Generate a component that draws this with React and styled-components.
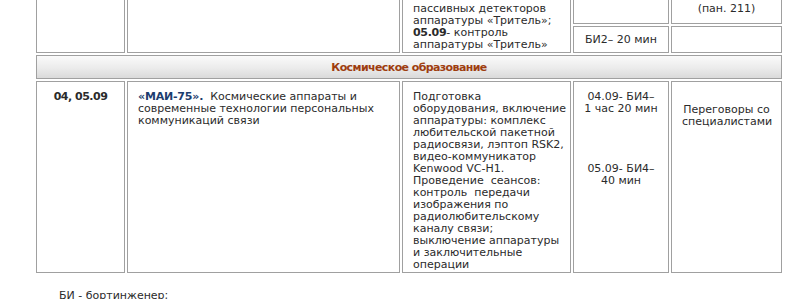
import React from "react";
import styled, { createGlobalStyle } from "styled-components";

const GlobalStyle = createGlobalStyle`
  html, body {
    margin: 0;
    padding: 0;
    background: #ffffff;
  }
  body {
    font-family: "DejaVu Sans", Verdana, sans-serif;
    font-size: 11px;
    line-height: 12px;
    color: #2b2b2b;
  }
`;

const Page = styled.div`
  height: 299px;
  overflow: hidden;
  padding-left: 34px;
`;

const Schedule = styled.table`
  border-collapse: separate;
  border-spacing: 2px;
  table-layout: fixed;
  width: 750px;
  margin-top: -21px;
  font: 11px/12px "DejaVu Sans", Verdana, sans-serif;
  color: #2b2b2b;
`;

const Col = styled.col`
  width: ${(p) => p.$w}px;
`;

const Row = styled.tr`
  height: ${(p) => (p.$h ? `${p.$h}px` : "auto")};
`;

const Cell = styled.td`
  box-sizing: border-box;
  border: 1px solid #a0a0a0;
  padding: ${(p) => (p.$middle ? "5px 10px" : `${p.$padTop ?? 9}px 10px 1px`)};
  vertical-align: ${(p) => (p.$middle ? "middle" : "top")};
  text-align: ${(p) => p.$align || "left"};
  white-space: nowrap;
  font-weight: ${(p) => (p.$bold ? 700 : 400)};
  letter-spacing: ${(p) => (p.$bold ? "-0.5px" : "0")};
`;

const SectionCell = styled.td`
  border: 1px solid #a0a0a0;
  padding: 6px 10px 4px;
  text-align: center;
  font-weight: 700;
  letter-spacing: -0.6px;
  color: #9e3d10;
  background: linear-gradient(to bottom, #fafafa 0%, #ebebeb 55%, #dadada 100%);
`;

const Strong = styled.b`
  font-weight: 700;
  letter-spacing: -0.3px;
`;

const Project = styled.b`
  font-weight: 700;
  letter-spacing: -0.2px;
  color: #1c3d6e;
`;

const Slot = styled.div`
  margin-top: ${(p) => p.$gap || 0}px;
`;

const Note = styled.p`
  margin: 15px 0 0;
  padding-left: 25px;
  font: 11px/12px "DejaVu Sans", Verdana, sans-serif;
  color: #2b2b2b;
`;

export default function App() {
  return (
    <>
      <GlobalStyle />
      <Page>
        <Schedule>
          <colgroup>
            <Col $w={89} />
            <Col $w={273} />
            <Col $w={169} />
            <Col $w={96} />
            <Col $w={111} />
          </colgroup>
          <tbody>
            <Row $h={43}>
              <Cell rowSpan={2} />
              <Cell rowSpan={2} />
              <Cell rowSpan={2} $padTop={21}>
                пассивных детекторов
                <br />
                аппаратуры «Тритель»;
                <br />
                <Strong>05.09</Strong>- контроль
                <br />
                аппаратуры «Тритель»
              </Cell>
              <Cell $align="center" />
              <Cell $align="center" $padTop={21}>
                (пан. 211)
              </Cell>
            </Row>
            <Row $h={27}>
              <Cell $align="center" $middle>
                БИ2– 20 мин
              </Cell>
              <Cell />
            </Row>
            <tr>
              <SectionCell colSpan={5}>Космическое образование</SectionCell>
            </tr>
            <tr>
              <Cell $align="center" $bold>
                04, 05.09
              </Cell>
              <Cell>
                <Project>«МАИ-75».</Project>{"\u00a0 "}Космические аппараты и
                <br />
                современные технологии персональных
                <br />
                коммуникаций связи
              </Cell>
              <Cell>
                Подготовка
                <br />
                оборудования, включение
                <br />
                аппаратуры: комплекс
                <br />
                любительской пакетной
                <br />
                радиосвязи, лэптоп RSK2,
                <br />
                видео-коммуникатор
                <br />
                Kenwood VC-H1.
                <br />
                Проведение{"\u00a0 "}сеансов:
                <br />
                контроль{"\u00a0 "}передачи
                <br />
                изображения по
                <br />
                радиолюбительскому
                <br />
                каналу связи;
                <br />
                выключение аппаратуры
                <br />
                и заключительные
                <br />
                операции
              </Cell>
              <Cell $align="center">
                <Slot>
                  04.09- БИ4–
                  <br />1 час 20 мин
                </Slot>
                <Slot $gap={48}>
                  05.09- БИ4–
                  <br />
                  40 мин
                </Slot>
              </Cell>
              <Cell $align="center" $padTop={22}>
                Переговоры со
                <br />
                специалистами
              </Cell>
            </tr>
          </tbody>
        </Schedule>
        <Note>БИ - бортинженер;</Note>
      </Page>
    </>
  );
}
